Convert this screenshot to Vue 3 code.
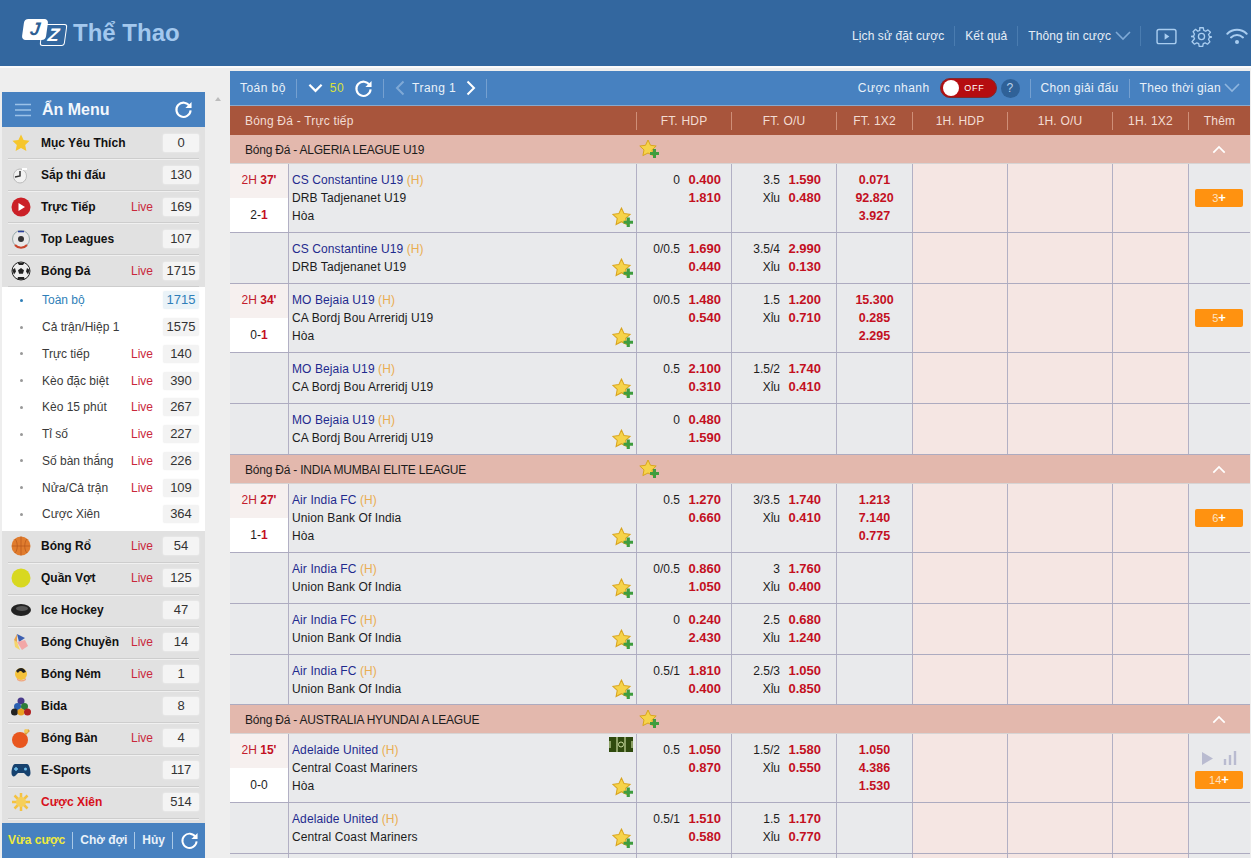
<script setup>
const sports = [
  { key: 'star', name: 'Mục Yêu Thích', count: 0 },
  { key: 'clock', name: 'Sắp thi đấu', count: 130 },
  { key: 'play', name: 'Trực Tiếp', live: true, count: 169 },
  { key: 'league', name: 'Top Leagues', count: 107 },
  { key: 'soccer', name: 'Bóng Đá', live: true, count: 1715 }
]

const subItems = [
  { name: 'Toàn bộ', count: 1715, active: true },
  { name: 'Cả trận/Hiệp 1', count: 1575 },
  { name: 'Trực tiếp', live: true, count: 140 },
  { name: 'Kèo đặc biệt', live: true, count: 390 },
  { name: 'Kèo 15 phút', live: true, count: 267 },
  { name: 'Tỉ số', live: true, count: 227 },
  { name: 'Số bàn thắng', live: true, count: 226 },
  { name: 'Nửa/Cả trận', live: true, count: 109 },
  { name: 'Cược Xiên', count: 364 }
]

const otherSports = [
  { key: 'basket', name: 'Bóng Rổ', live: true, count: 54 },
  { key: 'tennis', name: 'Quần Vợt', live: true, count: 125 },
  { key: 'puck', name: 'Ice Hockey', count: 47 },
  { key: 'volley', name: 'Bóng Chuyền', live: true, count: 14 },
  { key: 'hand', name: 'Bóng Ném', live: true, count: 1 },
  { key: 'pool', name: 'Bida', count: 8 },
  { key: 'pong', name: 'Bóng Bàn', live: true, count: 4 },
  { key: 'pad', name: 'E-Sports', count: 117 },
  { key: 'sun', name: 'Cược Xiên', red: true, count: 514 }
]

const columns = ['FT. HDP', 'FT. O/U', 'FT. 1X2', '1H. HDP', '1H. O/U', '1H. 1X2', 'Thêm']

const leagues = [
  {
    name: 'Bóng Đá - ALGERIA LEAGUE U19',
    rows: [
      { half: '2H', min: "37'", score: ['2', '1'], scoreRed: true, home: 'CS Constantine U19', away: 'DRB Tadjenanet U19', hdp: ['0', '0.400', '1.810'], ou: ['3.5', '1.590', '0.480'], x12: ['0.071', '92.820', '3.927'], more: 3 },
      { home: 'CS Constantine U19', away: 'DRB Tadjenanet U19', hdp: ['0/0.5', '1.690', '0.440'], ou: ['3.5/4', '2.990', '0.130'] },
      { half: '2H', min: "34'", score: ['0', '1'], scoreRed: true, home: 'MO Bejaia U19', away: 'CA Bordj Bou Arreridj U19', hdp: ['0/0.5', '1.480', '0.540'], ou: ['1.5', '1.200', '0.710'], x12: ['15.300', '0.285', '2.295'], more: 5 },
      { home: 'MO Bejaia U19', away: 'CA Bordj Bou Arreridj U19', hdp: ['0.5', '2.100', '0.310'], ou: ['1.5/2', '1.740', '0.410'] },
      { home: 'MO Bejaia U19', away: 'CA Bordj Bou Arreridj U19', hdp: ['0', '0.480', '1.590'] }
    ]
  },
  {
    name: 'Bóng Đá - INDIA MUMBAI ELITE LEAGUE',
    rows: [
      { half: '2H', min: "27'", score: ['1', '1'], scoreRed: true, home: 'Air India FC', away: 'Union Bank Of India', hdp: ['0.5', '1.270', '0.660'], ou: ['3/3.5', '1.740', '0.410'], x12: ['1.213', '7.140', '0.775'], more: 6 },
      { home: 'Air India FC', away: 'Union Bank Of India', hdp: ['0/0.5', '0.860', '1.050'], ou: ['3', '1.760', '0.400'] },
      { home: 'Air India FC', away: 'Union Bank Of India', hdp: ['0', '0.240', '2.430'], ou: ['2.5', '0.680', '1.240'] },
      { home: 'Air India FC', away: 'Union Bank Of India', hdp: ['0.5/1', '1.810', '0.400'], ou: ['2.5/3', '1.050', '0.850'], tight: true }
    ]
  },
  {
    name: 'Bóng Đá - AUSTRALIA HYUNDAI A LEAGUE',
    rows: [
      { half: '2H', min: "15'", score: ['0', '0'], home: 'Adelaide United', away: 'Central Coast Mariners', hdp: ['0.5', '1.050', '0.870'], ou: ['1.5/2', '1.580', '0.550'], x12: ['1.050', '4.386', '1.530'], more: 14, field: true },
      { home: 'Adelaide United', away: 'Central Coast Mariners', hdp: ['0.5/1', '1.510', '0.580'], ou: ['1.5', '1.170', '0.770'] }
    ]
  }
]
</script>

<template>
  <div class="page">
    <header class="topbar">
      <div class="brand">
        <span class="logo">
          <span class="logo-j">J</span>
          <span class="logo-z">Z</span>
        </span>
        <span class="brand-name">Thể Thao</span>
      </div>
      <nav class="topnav">
        <a>Lịch sử đặt cược</a>
        <i class="sep"></i>
        <a>Kết quả</a>
        <i class="sep"></i>
        <a>Thông tin cược</a>
        <svg class="chev-small" viewBox="0 0 16 10" width="16" height="10"><path d="M1 1l7 7 7-7" fill="none" stroke="#7fa9d6" stroke-width="1.6"/></svg>
        <i class="sep sep-wide"></i>
        <svg viewBox="0 0 22 18" width="21" height="17"><rect x="1" y="1.5" width="20" height="15" rx="2" fill="none" stroke="#a9cdf0" stroke-width="1.5"/><path d="M9 5.5l5 3.5-5 3.5z" fill="#a9cdf0"/></svg>
        <svg class="gear" viewBox="0 0 24 24" width="21" height="21"><path d="M10 2h4l.6 3 2.2 1 2.6-1.6 2.8 2.8L20 9.800l1 2.200 3 .6v0l-3 .6-1 2.200 1.600 2.600-2.800 2.800-2.600-1.600-2.200 1-.6 3h-4l-.6-3-2.200-1-2.600 1.600-2.800-2.800L4 14.600l-1-2.200-3-.4 3-.6 1-2.200-1.600-2.600 2.800-2.800L7.800 6l2.200-1z" fill="none" stroke="#a9cdf0" stroke-width="1.500" stroke-linejoin="round"/><circle cx="12" cy="12" r="3.500" fill="none" stroke="#a9cdf0" stroke-width="1.500"/></svg>
        <svg class="wifi" viewBox="0 0 24 18" width="22" height="17"><path d="M1.500 6a15 15 0 0 1 21 0M5.500 10a9.500 9.500 0 0 1 13 0" fill="none" stroke="#a9cdf0" stroke-width="2.200" stroke-linecap="round"/><circle cx="12" cy="15" r="2.200" fill="#a9cdf0"/></svg>
      </nav>
    </header>

    <div class="body-wrap">
      <aside class="sidebar">
        <div class="menu-head">
          <svg viewBox="0 0 16 14" width="16" height="14"><path d="M0 1.500h16M0 7h16M0 12.500h16" stroke="#9cc2e8" stroke-width="1.400"/></svg>
          <span class="menu-title">Ẩn Menu</span>
          <svg class="refresh-big" viewBox="0 0 20 20" width="19" height="19"><path d="M16.500 6.500A7.500 7.500 0 1 0 17.500 11" fill="none" stroke="#fff" stroke-width="2.200"/><path d="M18.500 2v6.500H12z" fill="#fff"/></svg>
        </div>

        <div v-for="s in sports" :key="s.key" class="sport">
          <span class="sport-icon">
            <svg viewBox="0 0 20 20" width="20" height="20">
              <path v-if="s.key === 'star'" d="M10 1.500l2.600 5.600 6 .7-4.400 4.100 1.200 6L10 15l-5.400 2.900 1.200-6L1.400 7.800l6-.7z" fill="#f6c62c"/>
              <template v-if="s.key === 'clock'">
                <ellipse cx="9" cy="11" rx="6.500" ry="7" fill="#f2f2f2" stroke="#bbb"/>
                <path d="M9 6v5l-5 1" fill="none" stroke="#333" stroke-width="1.500"/>
                <path d="M11 3h5v2h-5z" fill="#fff"/>
              </template>
              <template v-if="s.key === 'play'">
                <circle cx="10" cy="10" r="9.500" fill="#cb2027"/>
                <path d="M7.500 6l6.500 4-6.500 4z" fill="#fff"/>
              </template>
              <template v-if="s.key === 'league'">
                <circle cx="10" cy="10" r="8.500" fill="#e8e8e8" stroke="#9aa"/>
                <circle cx="10" cy="10" r="3" fill="#333"/>
                <path d="M7 1.800h6v1.500H7z" fill="#2a3f9b"/>
                <path d="M4 16a8 8 0 0 0 12 0" fill="none" stroke="#c9452c" stroke-width="2"/>
              </template>
              <template v-if="s.key === 'soccer'">
                <circle cx="10" cy="10" r="9" fill="#eee" stroke="#222"/>
                <path d="M10 7l3 2.200-1.100 3.500H8.100L7 9.200z" fill="#222"/>
                <path d="M6.500 1.700h7L12 4H8zM1.300 9L4 7l1 3.500-2 3zM18.700 9L16 7l-1 3.500 2 3zM7 16h6l.8 2.600H6.200z" fill="#222"/>
              </template>
            </svg>
          </span>
          <span class="sport-name">{{ s.name }}</span>
          <span v-if="s.live" class="live">Live</span>
          <span class="count">{{ s.count }}</span>
        </div>

        <ul class="sub">
          <li v-for="it in subItems" :key="it.name" :class="{ active: it.active }">
            <i class="dot"></i>
            <span class="sub-name">{{ it.name }}</span>
            <span v-if="it.live" class="live">Live</span>
            <span class="count">{{ it.count }}</span>
          </li>
        </ul>

        <div v-for="s in otherSports" :key="s.key" class="sport">
          <span class="sport-icon">
            <svg viewBox="0 0 20 20" width="20" height="20">
              <template v-if="s.key === 'basket'">
                <circle cx="10" cy="10" r="9.500" fill="#e07c2e"/>
                <path d="M1 10h18M10 .5v19M4 3c3 3 3 11 0 14M16 3c-3 3-3 11 0 14" fill="none" stroke="#b4561a" stroke-width=".7"/>
              </template>
              <template v-if="s.key === 'tennis'">
                <circle cx="10" cy="10" r="9.500" fill="#d8d820"/>
              </template>
              <template v-if="s.key === 'puck'">
                <ellipse cx="10" cy="10" rx="10" ry="6" fill="#222"/>
                <ellipse cx="11" cy="8.500" rx="6" ry="2.500" fill="#555"/>
              </template>
              <template v-if="s.key === 'volley'">
                <path d="M6 2l8 4-6 4z" fill="#3c5fb0"/>
                <path d="M6 10l8-2 3 6-6 4z" fill="#f2a7a7"/>
                <path d="M3 8l3 2 3 8-5-3z" fill="#f4d56a"/>
                <path d="M6 2L3 8l3 2z" fill="#e8a14c"/>
              </template>
              <template v-if="s.key === 'hand'">
                <circle cx="10" cy="10" r="6" fill="#f5c23a"/>
                <path d="M5 7c3-4 8-4 10 1l-3 1c-2-3-4-2-5 0z" fill="#222"/>
                <path d="M6 14c3 3 6 3 9 0v2c-3 2-6 2-9 0z" fill="#f0a880"/>
              </template>
              <template v-if="s.key === 'pool'">
                <circle cx="10" cy="5" r="3.500" fill="#4a3a8c"/>
                <circle cx="6.500" cy="10.500" r="3.500" fill="#2a5fb0"/>
                <circle cx="13.500" cy="10.500" r="3.500" fill="#2e7d3a"/>
                <circle cx="3.500" cy="16" r="3.500" fill="#222"/>
                <circle cx="10" cy="16" r="3.500" fill="#e8a020"/>
                <circle cx="16.500" cy="16" r="3.500" fill="#b02020"/>
              </template>
              <template v-if="s.key === 'pong'">
                <circle cx="9" cy="12" r="8" fill="#e8561e"/>
                <path d="M14 6l4-4" stroke="#d9a23a" stroke-width="2.500"/>
                <circle cx="15" cy="3" r="2" fill="#f4c95a"/>
              </template>
              <template v-if="s.key === 'pad'">
                <path d="M4 4h12c2 0 3.500 5 3.500 9 0 3-2 4-3.500 3l-3-3H7l-3 3c-1.500 1-3.500 0-3.500-3 0-4 1.500-9 3.500-9z" fill="#16416e"/>
                <path d="M5 7v4M3 9h4" stroke="#6fc0ee" stroke-width="1.400"/>
                <circle cx="14.500" cy="9" r="1.500" fill="#6fc0ee"/>
              </template>
              <template v-if="s.key === 'sun'">
                <path d="M10 1v18M1 10h18M3.500 3.500l13 13M16.500 3.500l-13 13" stroke="#f4c242" stroke-width="2.500"/>
                <circle cx="10" cy="10" r="5" fill="#f6cf5a"/>
              </template>
            </svg>
          </span>
          <span class="sport-name" :class="{ red: s.red }">{{ s.name }}</span>
          <span v-if="s.live" class="live">Live</span>
          <span class="count">{{ s.count }}</span>
        </div>

        <div class="bet-tabs">
          <span class="tab tab-on">Vừa cược</span>
          <i class="tab-sep"></i>
          <span class="tab">Chờ đợi</span>
          <i class="tab-sep"></i>
          <span class="tab">Hủy</span>
          <i class="tab-sep"></i>
          <svg viewBox="0 0 20 20" width="19" height="19"><path d="M16.500 6.500A7.500 7.500 0 1 0 17.500 11" fill="none" stroke="#fff" stroke-width="2"/><path d="M18.500 2v6.500H12z" fill="#fff"/></svg>
        </div>
      </aside>

      <div class="rail"><span class="rail-up"></span></div>

      <main class="main">
        <div class="toolbar">
          <span>Toán bộ</span>
          <i class="bar-sep first"></i>
          <svg class="tb-chev" viewBox="0 0 16 10" width="15" height="10"><path d="M1.500 1.500L8 8l6.500-6.500" fill="none" stroke="#fff" stroke-width="2.400"/></svg>
          <span class="fifty">50</span>
          <svg class="tb-refresh" viewBox="0 0 20 20" width="19" height="19"><path d="M16.500 6.500A7.500 7.500 0 1 0 17.500 11" fill="none" stroke="#fff" stroke-width="2.200"/><path d="M18.500 2v6.500H12z" fill="#fff"/></svg>
          <i class="bar-sep second"></i>
          <svg class="tb-prev" viewBox="0 0 10 16" width="10" height="16"><path d="M8.500 1.500L2 8l6.500 6.500" fill="none" stroke="#7fa9d6" stroke-width="2"/></svg>
          <span class="page-no">Trang 1</span>
          <svg class="tb-next" viewBox="0 0 10 16" width="10" height="16"><path d="M1.500 1.500L8 8l-6.500 6.500" fill="none" stroke="#fff" stroke-width="2"/></svg>
          <i class="bar-sep third"></i>

          <span class="quick">Cược nhanh</span>
          <span class="toggle"><i class="knob"></i><b>OFF</b></span>
          <span class="help">?</span>
          <i class="bar-sep fourth"></i>
          <span class="tight-label">Chọn giải đấu</span>
          <i class="bar-sep fifth"></i>
          <span class="tight-label">Theo thời gian</span>
          <svg class="tb-down" viewBox="0 0 16 10" width="16" height="10"><path d="M1 1l7 7 7-7" fill="none" stroke="#8fb6df" stroke-width="1.600"/></svg>
        </div>

        <div class="table-head grid">
          <div class="head-title">Bóng Đá - Trực tiếp</div>
          <div v-for="c in columns" :key="c" class="head-col">{{ c }}</div>
        </div>

        <section v-for="lg in leagues" :key="lg.name">
          <div class="league">
            <span class="league-name">{{ lg.name }}</span>
            <svg class="fav" viewBox="0 0 20 20" width="20" height="20">
              <path d="M9 1l2.500 5.300 5.700.7-4.200 3.900 1.100 5.700L9 14l-5.100 2.600L5 10.900.8 7l5.700-.7z" fill="#f6d34a" stroke="#d9a520"/>
              <path d="M11 13h3v-3h3v3h3v3h-3v3h-3v-3h-3z" fill="#3f9d3f"/>
            </svg>
            <svg class="collapse" viewBox="0 0 16 10" width="14" height="9"><path d="M1.500 8.500L8 2l6.500 6.500" fill="none" stroke="#fff" stroke-width="2"/></svg>
          </div>

          <div v-for="(r, i) in lg.rows" :key="i" class="row grid" :class="{ tight: r.tight }">
            <div class="cell-time" :class="{ blank: !r.half }">
              <template v-if="r.half">
                <div class="clock-line">{{ r.half }} <b>{{ r.min }}</b></div>
                <div class="score-line">{{ r.score[0] }}-<b v-if="r.scoreRed">{{ r.score[1] }}</b><template v-else>{{ r.score[1] }}</template></div>
              </template>
            </div>
            <div class="cell-team">
              <div><span class="home">{{ r.home }}</span> <span class="h-mark">(H)</span></div>
              <div>{{ r.away }}</div>
              <div v-if="r.half">Hòa</div>
              <svg v-if="r.field" class="field" viewBox="0 0 24 15" width="24" height="15">
                <rect width="24" height="15" fill="#2f4a0e"/>
                <path d="M8 0v15M16 0v15M1 4v7M23 4v7" stroke="#c9d9a0" stroke-width="1.200"/>
                <circle cx="12" cy="7.500" r="2.500" fill="none" stroke="#c9d9a0"/>
              </svg>
              <svg class="fav-row" viewBox="0 0 20 20" width="21" height="21">
                <path d="M9 1l2.500 5.300 5.700.7-4.200 3.900 1.100 5.700L9 14l-5.100 2.600L5 10.900.8 7l5.700-.7z" fill="#f6d34a" stroke="#d9a520"/>
                <path d="M11 13h3v-3h3v3h3v3h-3v3h-3v-3h-3z" fill="#3f9d3f"/>
              </svg>
            </div>
            <div class="cell-odds hdp">
              <template v-if="r.hdp">
                <span>{{ r.hdp[0] }}</span><b>{{ r.hdp[1] }}</b>
                <span></span><b>{{ r.hdp[2] }}</b>
              </template>
            </div>
            <div class="cell-odds ou">
              <template v-if="r.ou">
                <span>{{ r.ou[0] }}</span><b>{{ r.ou[1] }}</b>
                <span>Xỉu</span><b>{{ r.ou[2] }}</b>
              </template>
            </div>
            <div class="cell-x12">
              <template v-if="r.x12"><b v-for="o in r.x12" :key="o">{{ o }}</b></template>
            </div>
            <div class="cell-empty"></div>
            <div class="cell-empty"></div>
            <div class="cell-empty"></div>
            <div class="cell-more">
              <div v-if="r.field" class="media">
                <svg viewBox="0 0 12 14" width="11" height="13"><path d="M0 0l12 7-12 7z" fill="#b9bbd0"/></svg>
                <svg viewBox="0 0 14 14" width="14" height="14"><path d="M2 8v6M7 4v10M12 0v14" stroke="#b9bbd0" stroke-width="2.400"/></svg>
              </div>
              <span v-if="r.more" class="more-btn">{{ r.more }}<b>+</b></span>
            </div>
          </div>
        </section>
        <div class="row grid tail">
          <div class="cell-time blank"></div>
          <div class="cell-team"></div>
          <div></div>
          <div></div>
          <div></div>
          <div class="cell-empty"></div>
          <div class="cell-empty"></div>
          <div class="cell-empty"></div>
          <div></div>
        </div>
      </main>
    </div>
  </div>
</template>

<style scoped>
.page {
  height: 858px;
  overflow: hidden;
  background: #eeeeee;
  font-family: "Liberation Sans", Arial, sans-serif;
  font-size: 12px;
  color: #1c1c1c;
}

.topbar {
  height: 66px;
  box-sizing: border-box;
  background: #33679f;
  box-shadow: 0 2px 0 #fafafa;
  display: flex;
  align-items: center;
  justify-content: space-between;
  padding: 0 3px 0 23px;
}

.brand {
  display: flex;
  align-items: center;
  gap: 6px;
}

.logo {
  display: flex;
  width: 44px;
  height: 28px;
  position: relative;
}

.logo-j {
  width: 24px;
  height: 21px;
  background: #fff;
  color: #2e5f94;
  border-radius: 4px;
  transform: skewX(-8deg);
  font: italic bold 18px/21px "Liberation Sans", sans-serif;
  text-align: center;
}

.logo-z {
  position: absolute;
  left: 18px;
  top: 5px;
  width: 25px;
  height: 22px;
  box-sizing: border-box;
  border: 1px solid #fff;
  border-radius: 3px;
  transform: skewX(-8deg);
  color: #fff;
  font: italic bold 18px/20px "Liberation Sans", sans-serif;
  text-align: center;
}

.brand-name {
  font-size: 24px;
  font-weight: bold;
  color: #a3c8ee;
}

.topnav {
  display: flex;
  align-items: center;
  color: #e6eef7;
  letter-spacing: 0.1px;
  height: 24px;
  padding-top: 6px;
}

.sep {
  width: 1px;
  height: 20px;
  background: #4a7cb0;
  margin: 0 10px;
}

.sep-wide {
  margin: 0 15px 0 9px;
}

.chev-small {
  margin-left: 4px;
}

.gear {
  margin-left: 14px;
}

.wifi {
  margin-left: 14px;
}

.body-wrap {
  display: flex;
  align-items: flex-start;
  padding-top: 5px;
}

.sidebar {
  width: 203px;
  margin: 21px 0 0 2px;
  background: #e1e1e1;
  flex: none;
}

.menu-head {
  height: 35px;
  background: #4781c0;
  display: flex;
  align-items: center;
  padding: 0 12px 0 13px;
  color: #fff;
}

.menu-title {
  font-size: 16px;
  font-weight: bold;
  margin-left: 11px;
  color: #f2f7fc;
}

.refresh-big {
  margin-left: auto;
}

.sport {
  height: 32px;
  box-sizing: border-box;
  margin: 0 6px;
  display: flex;
  align-items: center;
  border-bottom: 1px solid #cdcdcd;
  box-shadow: 0 1px 0 #f0f0f0;
}

.sport-icon {
  width: 30px;
  margin-left: 3px;
  flex: none;
  display: flex;
}

.sport-name {
  font-weight: bold;
  color: #111;
  flex: 1;
}

.sport-name.red {
  color: #d7111c;
}

.live {
  color: #c9283c;
  margin-right: 10px;
}

.count {
  width: 36px;
  height: 18px;
  line-height: 18px;
  background: #f4f4f4;
  box-shadow: 0 0 2px #f4f4f4;
  text-align: center;
  font-size: 13px;
  color: #333;
  border-radius: 2px;
}

.sub {
  list-style: none;
  margin: 0;
  padding: 0 0 3px;
  background: #fff;
}

.sub li {
  height: 26.75px;
  padding: 0 6px 0 18px;
  display: flex;
  align-items: center;
  color: #3a3a3a;
}

.sub li .count {
  background: #f3f3f3;
}

.sub li.active {
  color: #2f7fb8;
}

.sub li.active .count {
  color: #2f7fb8;
  background: #eaf3f8;
}

.dot {
  width: 3px;
  height: 3px;
  border-radius: 50%;
  background: #999;
  margin-right: 19px;
}

.active .dot {
  background: #2f7fb8;
}

.sub-name {
  flex: 1;
}

.bet-tabs {
  height: 35px;
  margin-top: 4px;
  background: #4781c0;
  display: flex;
  align-items: center;
  padding-left: 6px;
  color: #e9f1f9;
  font-weight: bold;
}

.tab-on {
  color: #f0ea3c;
}

.tab-sep {
  width: 1px;
  height: 17px;
  background: #a9c8e6;
  margin: 0 7px;
}

.rail {
  width: 25px;
  flex: none;
  padding-top: 26px;
  display: flex;
  justify-content: center;
}

.rail-up {
  border-left: 3px solid transparent;
  border-right: 3px solid transparent;
  border-bottom: 4px solid #bcbcbc;
}

.main {
  width: 1020px;
  flex: none;
  background: #e9eaec;
}

.toolbar {
  height: 35px;
  background: #4781c0;
  display: flex;
  align-items: center;
  padding: 0 10px;
  color: #e9f1f9;
  letter-spacing: 0.45px;
  box-sizing: border-box;
  border-bottom: 1px solid #8aa9cc;
}

.tight-label {
  letter-spacing: 0.3px;
}

.bar-sep {
  width: 1px;
  height: 19px;
  background: #75a0d0;
  margin: 0 10px;
}

.tb-chev {
  margin-left: 1px;
}

.fifty {
  color: #d9e23a;
  margin-left: 7px;
}

.tb-refresh {
  margin-left: 10px;
}

.tb-prev {
  margin-left: 1px;
}

.page-no {
  margin-left: 7px;
}

.tb-next {
  margin-left: 10px;
}

.quick {
  margin-left: auto;
}

.toggle {
  position: relative;
  width: 57px;
  height: 20px;
  box-sizing: border-box;
  border-radius: 10px;
  background: #b50d10;
  border: 1px solid #7e2a2e;
  margin-left: 10px;
  display: flex;
  align-items: center;
  justify-content: flex-end;
  padding-right: 11px;
}

.knob {
  position: absolute;
  left: 2px;
  top: 1px;
  width: 16px;
  height: 16px;
  border-radius: 50%;
  background: #fff;
}

.toggle b {
  font-size: 9px;
  font-weight: normal;
  color: #fff;
  letter-spacing: 0.8px;
}

.help {
  width: 19px;
  height: 19px;
  line-height: 19px;
  border-radius: 50%;
  background: #2f6198;
  text-align: center;
  margin-left: 4px;
  color: #b9d0e8;
}

.tb-down {
  margin-left: 3px;
}

.grid {
  display: grid;
  grid-template-columns: 58px 348px 95px 105px 76px 95px 105px 76px 62px;
}

.table-head {
  height: 29px;
  background: #a8553c;
  color: #f3dcd3;
  align-items: center;
  letter-spacing: 0.2px;
}

.head-title {
  grid-column: 1 / 3;
  padding-left: 15px;
}

.head-col {
  text-align: center;
  height: 18px;
  line-height: 18px;
  border-left: 1px solid #cf8f78;
}

.league {
  height: 29px;
  box-sizing: border-box;
  background: #e3b8ad;
  border-bottom: 1px solid #d7d4d4;
  display: flex;
  align-items: center;
  color: #1c1c1c;
}

.league-name {
  width: 409px;
  padding: 1px 0 0 15px;
  box-sizing: border-box;
  flex: none;
  letter-spacing: -0.22px;
}

.fav {
  flex: none;
}

.collapse {
  margin-left: auto;
  margin-right: 24px;
}

.row {
  border-bottom: 1px solid #adabc0;
  line-height: 18px;
}

.row > div {
  padding: 7px 0;
  border-left: 1px solid #b2b0c4;
  box-sizing: border-box;
}

.row.tight > div {
  padding-bottom: 6px;
}

.row.tail {
  height: 20px;
}

.row > .cell-time {
  padding: 0;
  border-left: 0;
  text-align: center;
  background: #fff;
}

.row > .cell-time.blank {
  background: #e9eaec;
}

.clock-line {
  height: 34px;
  line-height: 33px;
  background: #f6f0ef;
  color: #c3202e;
}

.score-line {
  height: 34px;
  line-height: 34px;
}

.clock-line b,
.score-line b {
  color: #c3101f;
}

.cell-team {
  position: relative;
  padding-left: 3px !important;
  letter-spacing: 0.1px;
}

.home {
  color: #1f2a8e;
}

.h-mark {
  color: #e9ad52;
}

.fav-row {
  position: absolute;
  right: 3px;
  bottom: 4px;
}

.field {
  position: absolute;
  right: 3px;
  top: 3px;
}

.cell-odds {
  display: grid;
  align-content: start;
}

.cell-odds span {
  text-align: right;
}

.cell-odds b {
  text-align: right;
  color: #c3101f;
  font-size: 13px;
}

.hdp {
  grid-template-columns: 43px 41px;
}

.ou {
  grid-template-columns: 48px 41px;
}

.cell-x12 {
  display: flex;
  flex-direction: column;
  align-items: center;
  color: #c3101f;
  font-size: 12.5px;
}

.cell-empty {
  background: #f5e6e3;
}

.row > .cell-more {
  display: flex;
  flex-direction: column;
  align-items: center;
  justify-content: center;
  padding: 0 1px 0 0;
}

.media {
  display: flex;
  align-items: flex-end;
  gap: 10px;
  margin: 4px 0 6px 0;
}

.more-btn {
  width: 48px;
  height: 18px;
  line-height: 18px;
  border-radius: 2px;
  background: #ff9210;
  color: #fde3c0;
  text-align: center;
  font-size: 11px;
}

.more-btn b {
  color: #fff;
  font-size: 13px;
}
</style>

<style>
html,
body {
  margin: 0;
  overflow: hidden;
}
</style>
